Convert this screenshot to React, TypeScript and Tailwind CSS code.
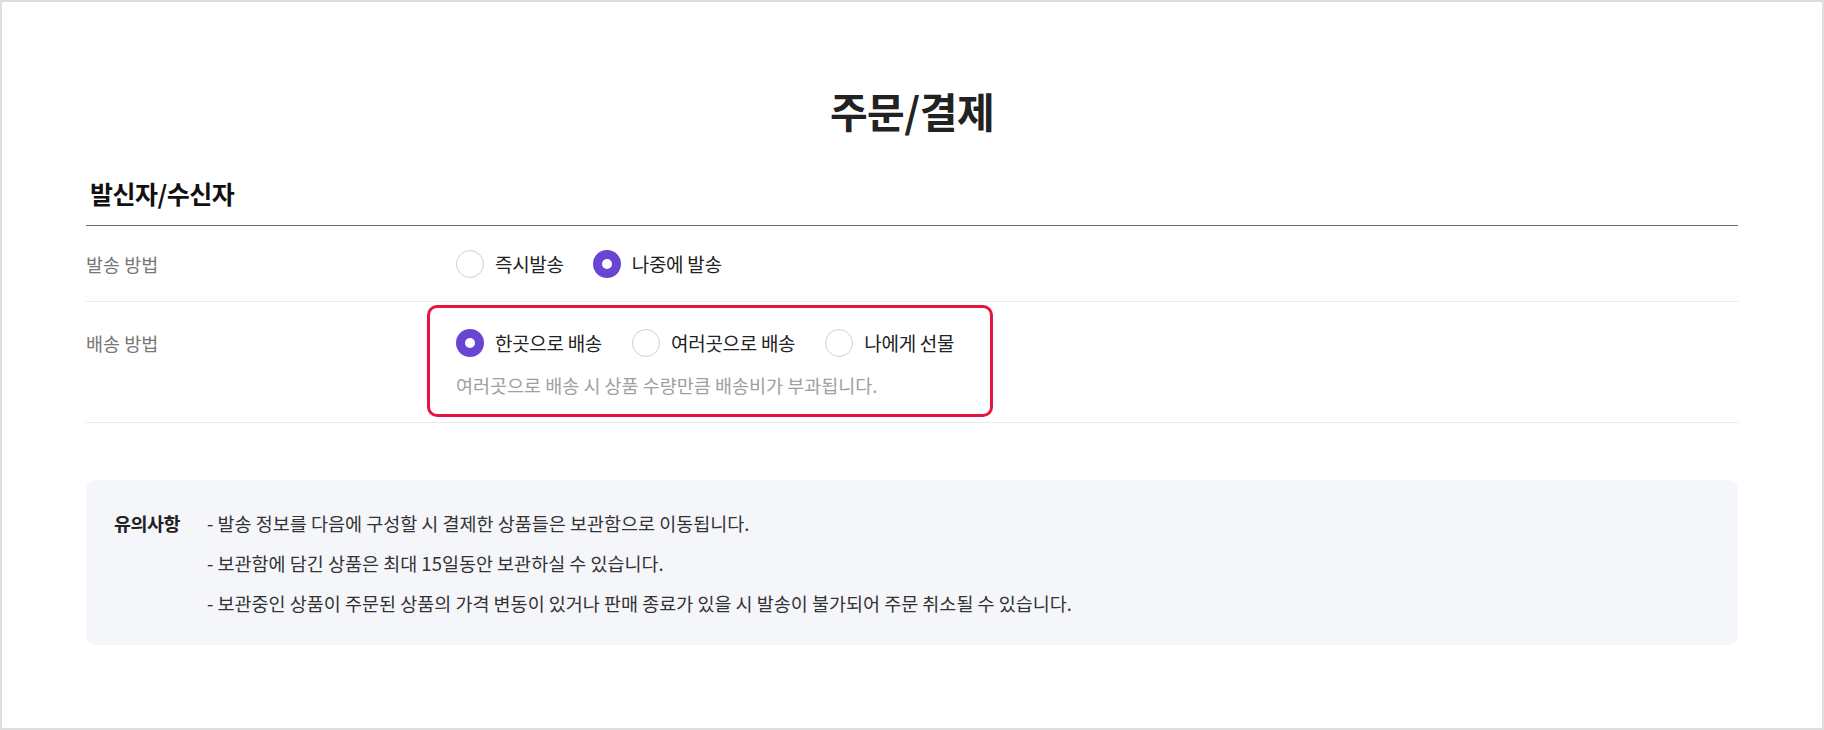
import { useState } from 'react'

const FONT = { fontFamily: '"Noto Sans CJK KR", "Noto Sans", sans-serif' }

interface RadioProps {
  label: string
  checked: boolean
  onSelect: () => void
}

function Radio({ label, checked, onSelect }: RadioProps) {
  return (
    <button type="button" onClick={onSelect} className="flex items-center gap-[11px]">
      {checked ? (
        <span className="w-[28px] h-[28px] rounded-full bg-[#6a45d4] flex items-center justify-center shrink-0">
          <span className="w-[10px] h-[10px] rounded-full bg-white" />
        </span>
      ) : (
        <span className="w-[28px] h-[28px] rounded-full border border-[#cfcfcf] bg-white shrink-0" />
      )}
      <span className="text-[19px] leading-[28px] text-[#222] tracking-[-0.3px]">{label}</span>
    </button>
  )
}

const SEND_OPTIONS = ['즉시발송', '나중에 발송']
const SHIP_OPTIONS = ['한곳으로 배송', '여러곳으로 배송', '나에게 선물']

const NOTICES = [
  '- 발송 정보를 다음에 구성할 시 결제한 상품들은 보관함으로 이동됩니다.',
  '- 보관함에 담긴 상품은 최대 15일동안 보관하실 수 있습니다.',
  '- 보관중인 상품이 주문된 상품의 가격 변동이 있거나 판매 종료가 있을 시 발송이 불가되어 주문 취소될 수 있습니다.',
]

export default function App() {
  const [send, setSend] = useState(1)
  const [ship, setShip] = useState(0)

  return (
    <div className="w-[1824px] h-[730px] bg-white border-2 border-[#dedede]" style={FONT}>
      <div className="w-[1652px] mx-auto">
        {/* Title */}
        <h1 className="pt-[85px] text-center text-[41px] leading-[46px] font-bold text-[#222] tracking-[-0.5px]">
          주문/결제
        </h1>

        {/* Section header */}
        <div className="mt-[44px] pb-[16px] border-b border-[#666] px-[4px]">
          <h2 className="text-[25px] leading-[32px] font-bold text-[#111] tracking-[-0.5px]">발신자/수신자</h2>
        </div>

        {/* Row: 발송 방법 */}
        <div className="flex items-center h-[76px] border-b border-[#ececec]">
          <div className="w-[370px] text-[18.5px] leading-[24px] text-[#777]">발송 방법</div>
          <div className="flex items-center gap-[29px]">
            {SEND_OPTIONS.map((o, i) => (
              <Radio key={o} label={o} checked={send === i} onSelect={() => setSend(i)} />
            ))}
          </div>
        </div>

        {/* Row: 배송 방법 */}
        <div className="flex items-start border-b border-[#ececec]">
          <div className="w-[370px] pt-[29px] text-[18.5px] leading-[24px] text-[#777]">배송 방법</div>
          <div className="relative pt-[27px] pb-[25px]">
            <div className="flex items-center gap-[30px]">
              {SHIP_OPTIONS.map((o, i) => (
                <Radio key={o} label={o} checked={ship === i} onSelect={() => setShip(i)} />
              ))}
            </div>
            <p className="mt-[16px] text-[18.5px] leading-[24px] text-[#a0a0a0]">
              여러곳으로 배송 시 상품 수량만큼 배송비가 부과됩니다.
            </p>
            {/* highlight annotation */}
            <div className="absolute -left-[29px] top-[3px] w-[566px] h-[112px] border-[3px] border-[#e5153f] rounded-[10px] pointer-events-none" />
          </div>
        </div>

        {/* Notice */}
        <div className="mt-[57px] rounded-[10px] bg-[#f5f6fa] pt-[31px] pb-[30px] pl-[28px] flex">
          <div className="w-[93px] shrink-0 text-[18.5px] leading-[24px] font-bold text-[#222] tracking-[-0.5px]">유의사항</div>
          <div className="flex flex-col gap-[16px]">
            {NOTICES.map((n) => (
              <p key={n} className="text-[18.5px] leading-[24px] text-[#333]">{n}</p>
            ))}
          </div>
        </div>
      </div>
    </div>
  )
}
